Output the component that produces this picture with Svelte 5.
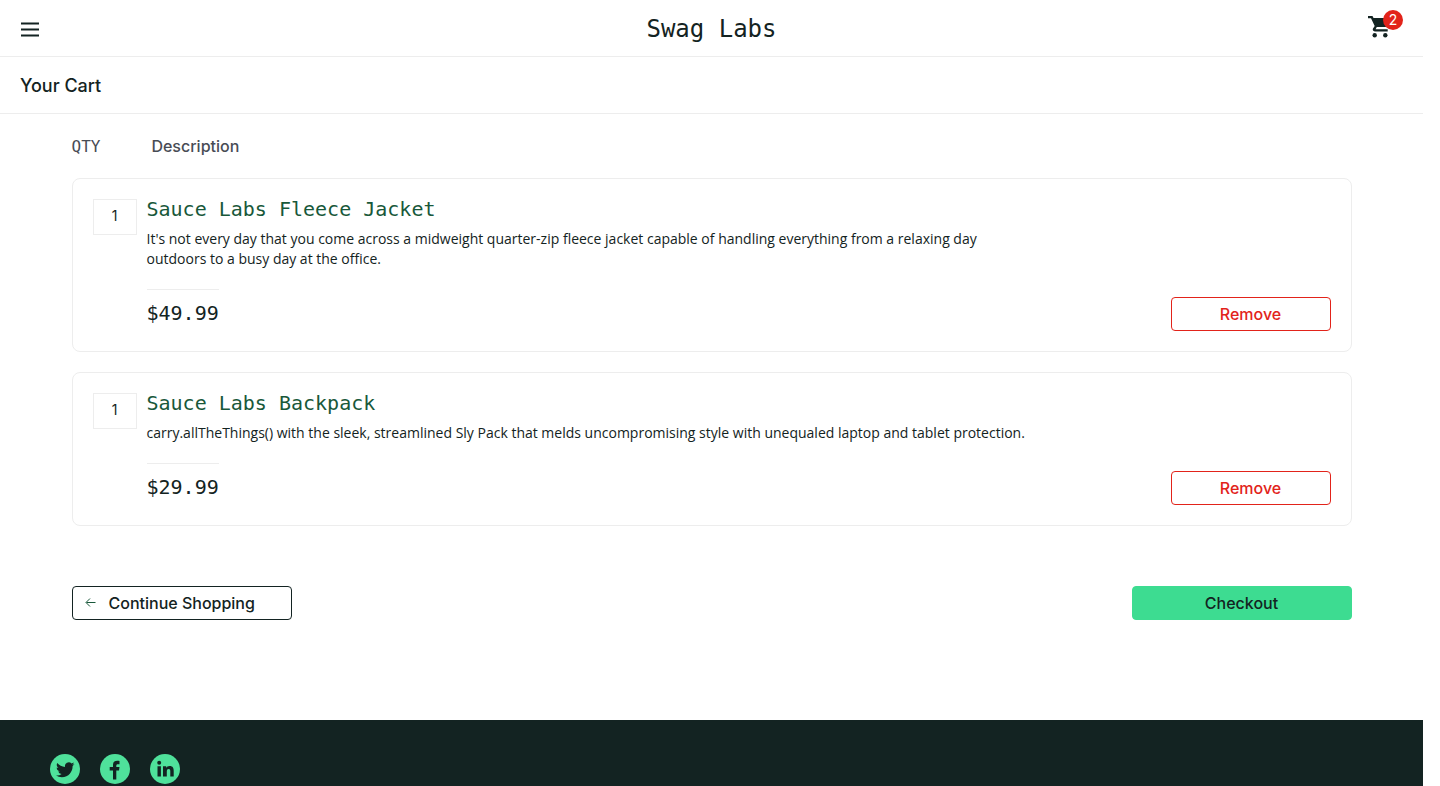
<script>
  const items = [
    {
      name: 'Sauce Labs Fleece Jacket',
      text: "It's not every day that you come across a midweight quarter-zip fleece jacket capable of handling everything from a relaxing day outdoors to a busy day at the office.",
      price: '$49.99'
    },
    {
      name: 'Sauce Labs Backpack',
      text: 'carry.allTheThings() with the sleek, streamlined Sly Pack that melds uncompromising style with unequaled laptop and tablet protection.',
      price: '$29.99'
    }
  ];
</script>

<div class="page">
  <header>
    <div class="bar">
      <button class="menu" aria-label="Open Menu">
        <svg width="20" height="20" viewBox="0 0 20 20" stroke="currentColor" stroke-width="2">
          <path d="M1 5.500h18M1 11.500h18M1 17.500h18" />
        </svg>
      </button>
      <div class="logo">Swag Labs</div>
      <a class="cart" href="#cart" aria-label="Shopping cart">
        <svg width="24" height="24" viewBox="0 0 24 24" fill="currentColor">
          <path d="M0 2v2.200h3l3.700 7.700-1.700 2.700C4.200 16 5.300 17.400 6.800 17.400h12.900v-2.200H7.600l1.200-2.100h8.400c.8 0 1.400-.4 1.700-1l3.600-6.600C22.900 4.600 22.400 4 21.600 4H5.500l-1-2H0z" />
          <circle cx="6.700" cy="21.300" r="2.200" />
          <circle cx="17.300" cy="21.300" r="2.200" />
        </svg>
        <span class="badge">2</span>
      </a>
    </div>
    <h1>Your Cart</h1>
  </header>

  <main>
    <div class="labels">
      <span class="qty-label">QTY</span>
      <span>Description</span>
    </div>
    <ul>
      {#each items as item}
        <li>
          <div class="qty">1</div>
          <div class="info">
            <a class="name" href="#item">{item.name}</a>
            <p>{item.text}</p>
            <div class="foot">
              <div class="price">{item.price}</div>
              <button class="btn remove">Remove</button>
            </div>
          </div>
        </li>
      {/each}
    </ul>
    <div class="actions">
      <button class="btn back">
        <svg width="12" height="12" viewBox="0 0 12 12" fill="none" stroke="#18583a">
          <path d="M10.500 5.500H1.500M5 1.500l-4 4 4 4" />
        </svg>
        Continue Shopping
      </button>
      <button class="btn checkout">Checkout</button>
    </div>
  </main>

  <footer>
    <a href="#twitter" aria-label="Twitter">
      <svg width="30" height="30" viewBox="0 0 30 30">
        <circle cx="15" cy="15" r="15" fill="#4fe19b" />
        <path fill="#132322" transform="translate(6 6.500) scale(.77)" d="M23.950 4.570a10 10 0 0 1-2.820.77 4.960 4.960 0 0 0 2.160-2.720c-.95.550-2 .95-3.130 1.180a4.920 4.920 0 0 0-8.380 4.480C7.690 8.100 4.070 6.130 1.640 3.160a4.820 4.820 0 0 0-.67 2.470c0 1.710.87 3.210 2.190 4.100a4.900 4.900 0 0 1-2.230-.62v.06a4.920 4.920 0 0 0 3.950 4.830 5 5 0 0 1-2.210.08 4.940 4.940 0 0 0 4.600 3.420A9.870 9.870 0 0 1 0 19.540a14 14 0 0 0 7.550 2.210c9.050 0 14-7.500 14-13.980 0-.21 0-.42-.02-.63a9.940 9.940 0 0 0 2.420-2.570z" />
      </svg>
    </a>
    <a href="#facebook" aria-label="Facebook">
      <svg width="30" height="30" viewBox="0 0 30 30">
        <circle cx="15" cy="15" r="15" fill="#4fe19b" />
        <path fill="#132322" d="M13 25.500V16.500h-3.300V13H13v-2.300C13 8 14.700 6.800 17.200 6.800c1 0 1.800.1 2.300.2v3.200h-1.600c-1.300 0-1.600.6-1.600 1.500V13h3.200l-.5 3.500h-2.700v9z" />
      </svg>
    </a>
    <a href="#linkedin" aria-label="LinkedIn">
      <svg width="30" height="30" viewBox="0 0 30 30">
        <circle cx="15" cy="15" r="15" fill="#4fe19b" />
        <g fill="#132322">
          <circle cx="9.200" cy="8.800" r="2" />
          <path d="M7.500 12.200h3.400V22.500H7.500zM13 12.200h3.200v1.500c.5-.9 1.600-1.800 3.400-1.800 3.400 0 4.100 2.200 4.100 5.100v5.500h-3.400v-4.900c0-1.200 0-2.700-1.600-2.700s-1.900 1.300-1.900 2.600v5H13z" />
        </g>
      </svg>
    </a>
  </footer>
</div>

<style>
  :global(body) { margin: 0; background: #fff; }
  .page {
    box-sizing: border-box;
    min-height: 100vh;
    padding-right: 17px;
    display: flex;
    flex-direction: column;
    color: #132322;
    font-family: 'Inter', 'Open Sans', sans-serif;
    font-size: 14px;
    line-height: 20px;
  }
  .bar {
    display: grid;
    grid-template-columns: 1fr auto 1fr;
    align-items: center;
    height: 56px;
    padding: 0 20px;
    border-bottom: 1px solid #ededed;
  }
  .menu {
    justify-self: start;
    display: flex;
    padding: 0;
    border: 0;
    background: none;
    color: inherit;
  }
  .logo {
    padding-top: 2px;
    font: 24px/32px 'DejaVu Sans Mono', monospace;
  }
  .cart {
    align-self: start;
    justify-self: end;
    position: relative;
    margin-top: 14px;
    padding-right: 11px;
    display: flex;
    color: inherit;
  }
  .badge {
    position: absolute;
    top: -4px;
    right: 0;
    width: 20px;
    border-radius: 10px;
    background: #e2231a;
    color: #fff;
    text-align: center;
  }
  h1 {
    margin: 0;
    padding: 17px 20px 15px;
    border-bottom: 1px solid #ededed;
    font-size: 18px;
    line-height: 24px;
    font-weight: 500;
  }
  main {
    box-sizing: border-box;
    width: 100%;
    max-width: 1280px;
    margin: 0 auto;
    padding: 20px 0 100px;
  }
  .labels {
    display: flex;
    align-items: baseline;
    gap: 51px;
    padding-bottom: 19px;
    color: #484c55;
    font-size: 16px;
    line-height: 24px;
    font-weight: 500;
  }
  .qty-label { font-family: 'DejaVu Sans Mono', monospace; }
  ul {
    display: grid;
    gap: 20px;
    margin: 0;
    padding: 0;
    list-style: none;
  }
  li {
    display: flex;
    gap: 10px;
    padding: 20px;
    border: 1px solid #ededed;
    border-radius: 8px;
  }
  .qty {
    box-sizing: border-box;
    width: 44px;
    height: 36px;
    padding-top: 6px;
    border: 1px solid #ededed;
    text-align: center;
  }
  .info { flex: 1; }
  .name {
    display: block;
    color: #18583a;
    font: 20px/20px 'DejaVu Sans Mono', monospace;
    text-decoration: none;
  }
  p {
    max-width: 880px;
    margin: 10px 0 20px;
    font-family: 'Open Sans', sans-serif;
  }
  .foot {
    display: flex;
    justify-content: space-between;
    align-items: flex-start;
  }
  .price {
    padding-top: 11px;
    border-top: 1px solid #ededed;
    font: 20px/24px 'DejaVu Sans Mono', monospace;
  }
  .btn {
    box-sizing: border-box;
    width: 220px;
    height: 34px;
    padding: 0 12px;
    border: 1px solid #132322;
    border-radius: 4px;
    background: #fff;
    color: #132322;
    font: 500 16px/24px 'Inter', sans-serif;
  }
  .remove {
    width: 160px;
    margin-top: 8px;
    border-color: #e2231a;
    color: #e2231a;
  }
  .actions {
    display: flex;
    justify-content: space-between;
    margin-top: 60px;
  }
  .back { display: flex; align-items: center; gap: 12px; }
  .checkout { border-color: #3ddc91; background: #3ddc91; }
  footer {
    flex: 1;
    display: flex;
    gap: 20px;
    padding: 34px 50px 0;
    background: #132322;
  }
  footer a { height: 30px; }
  footer svg { display: block; }
</style>
